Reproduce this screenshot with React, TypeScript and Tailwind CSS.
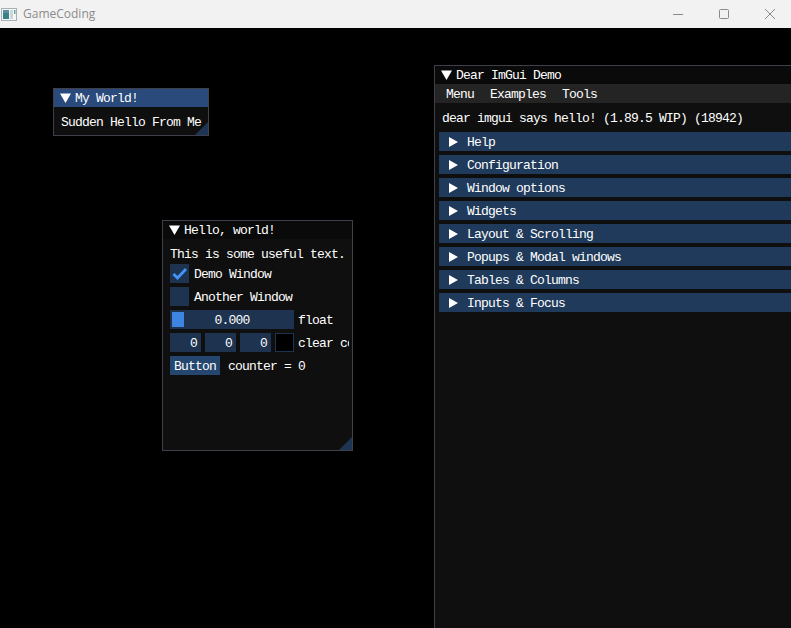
import React from "react";

const Down = () => (
  <svg width="11" height="10" viewBox="0 0 11 10" className="shrink-0"><polygon points="0,0.5 11,0.5 5.5,10" fill="#ffffff" /></svg>
);
const Right = () => (
  <svg width="9" height="10" viewBox="0 0 9 10" className="shrink-0"><polygon points="0,0 9,5 0,10" fill="#ffffff" /></svg>
);
const Grip = () => (
  <svg width="13" height="13" viewBox="0 0 13 13" className="absolute right-0 bottom-0"><polygon points="13,0 13,13 0,13" fill="#1d3452" /></svg>
);
const Row = ({ children }: { children: React.ReactNode }) => (
  <div className="flex h-[19px] items-center gap-1 whitespace-nowrap">{children}</div>
);
const Check = ({ checked, label }: { checked?: boolean; label: string }) => (
  <Row>
    <div className="flex h-[19px] w-[19px] shrink-0 items-center justify-center bg-[#1d3350]">
      {checked && (
        <svg width="15" height="15" viewBox="0 0 15 15"><polyline points="1.5,8 5.5,12 14,3" fill="none" stroke="#4296fa" strokeWidth="2.8" /></svg>
      )}
    </div>
    <span className="ml-[1px] pt-[2px]">{label}</span>
  </Row>
);
const Num = () => (
  <div className="flex h-[19px] w-[31px] shrink-0 items-center justify-end bg-[#1d3350] pr-1 pt-[2px]">0</div>
);

const headers = ["Help", "Configuration", "Window options", "Widgets", "Layout & Scrolling", "Popups & Modal windows", "Tables & Columns", "Inputs & Focus"];

export default function App() {
  return (
    <div className="flex h-[628px] w-[791px] flex-col overflow-hidden bg-black">
      <div className="flex h-7 shrink-0 items-center bg-[#f2f2f2]">
        <svg width="16" height="13" viewBox="0 0 16 13" className="ml-[1px] mr-[6px]">
          <rect x="0.5" y="0.5" width="15" height="12" fill="#f4f6f6" stroke="#a9b0b2" />
          <rect x="2" y="2" width="6" height="9" fill="#3d7f86" />
          <rect x="2" y="2" width="6" height="3" fill="#5a8ea8" />
          <rect x="9" y="2" width="3" height="9" fill="#cfd6d8" />
          <rect x="13" y="2" width="1.5" height="4" fill="#69a5a8" />
        </svg>
        <span className="font-['Open_Sans',sans-serif] text-[12px] text-[#8b8b8b]">GameCoding</span>
        <div className="ml-auto flex h-7 items-center">
          <svg width="12" height="12" viewBox="0 0 12 12" className="mr-[34px]"><line x1="1" y1="6.5" x2="11" y2="6.5" stroke="#8a8a8a" /></svg>
          <svg width="12" height="12" viewBox="0 0 12 12" className="mr-[34px]"><rect x="1.5" y="1.5" width="9" height="9" rx="1" fill="none" stroke="#8a8a8a" /></svg>
          <svg width="12" height="12" viewBox="0 0 12 12" className="mr-[15px]"><path d="M1 1 L11 11 M11 1 L1 11" stroke="#8a8a8a" /></svg>
        </div>
      </div>

      <div className="relative flex-1 bg-black font-['Liberation_Mono',monospace] text-[13px] leading-[13px] tracking-[-0.8px] text-white">
        {/* My World */}
        <div className="absolute left-[53px] top-[60px] h-[48px] w-[156px] overflow-hidden border border-[#3f3f49] bg-[#0f0f0f]">
          <div className="flex h-[18px] items-center gap-[4px] bg-[#294a7a] pl-[6px]">
            <Down />
            <span>My World!</span>
          </div>
          <div className="whitespace-nowrap pl-[7px] pt-[9px]">Sudden Hello From Me</div>
          <Grip />
        </div>

        {/* Hello, world */}
        <div className="absolute left-[162px] top-[192px] h-[231px] w-[191px] overflow-hidden border border-[#3f3f49] bg-[#0f0f0f]">
          <div className="flex h-[18px] items-center gap-[4px] bg-[#0a0a0a] pl-[6px]">
            <Down />
            <span>Hello, world!</span>
          </div>
          <div className="mr-[3px] flex flex-col gap-1 overflow-hidden pl-[7px] pt-2">
            <div className="h-[13px] whitespace-nowrap pt-[1px]">This is some useful text.</div>
            <Check checked label="Demo Window" />
            <Check label="Another Window" />
            <Row>
              <div className="relative flex h-[19px] w-[124px] shrink-0 items-center justify-center bg-[#1d3350] pt-[2px]">
                <div className="absolute left-[2px] top-[2px] h-[15px] w-3 bg-[#3d85e0]" />
                <span className="relative">0.000</span>
              </div>
              <span className="pt-[2px]">float</span>
            </Row>
            <Row>
              <Num />
              <Num />
              <Num />
              <div className="h-[19px] w-[19px] shrink-0 border border-[#1d3350] bg-black" />
              <span className="pt-[2px]">clear color</span>
            </Row>
            <Row>
              <div className="flex h-[19px] w-[50px] shrink-0 items-center justify-center bg-[#24466f] pt-[2px]">Button</div>
              <span className="ml-1 pt-[2px]">counter = 0</span>
            </Row>
          </div>
          <Grip />
        </div>

        {/* Demo */}
        <div className="absolute left-[434px] top-[37px] h-[600px] w-[400px] border border-[#3f3f49] bg-[#0f0f0f]">
          <div className="flex h-[18px] items-center gap-[4px] bg-[#0a0a0a] pl-[6px]">
            <Down />
            <span>Dear ImGui Demo</span>
          </div>
          <div className="flex h-[19px] items-center gap-4 bg-[#242424] pl-[11px] pt-[2px]">
            <span>Menu</span>
            <span>Examples</span>
            <span>Tools</span>
          </div>
          <div className="whitespace-nowrap pl-[7px] pt-[9px] pb-[7px]">dear imgui says hello! (1.89.5 WIP) (18942)</div>
          <div className="flex flex-col gap-1 pl-1">
            {headers.map((h) => (
              <div key={h} className="flex h-[19px] items-center gap-[9px] bg-[#1f3a5b] pl-[10px]">
                <Right />
                <span className="pt-[2px]">{h}</span>
              </div>
            ))}
          </div>
        </div>
      </div>
    </div>
  );
}
